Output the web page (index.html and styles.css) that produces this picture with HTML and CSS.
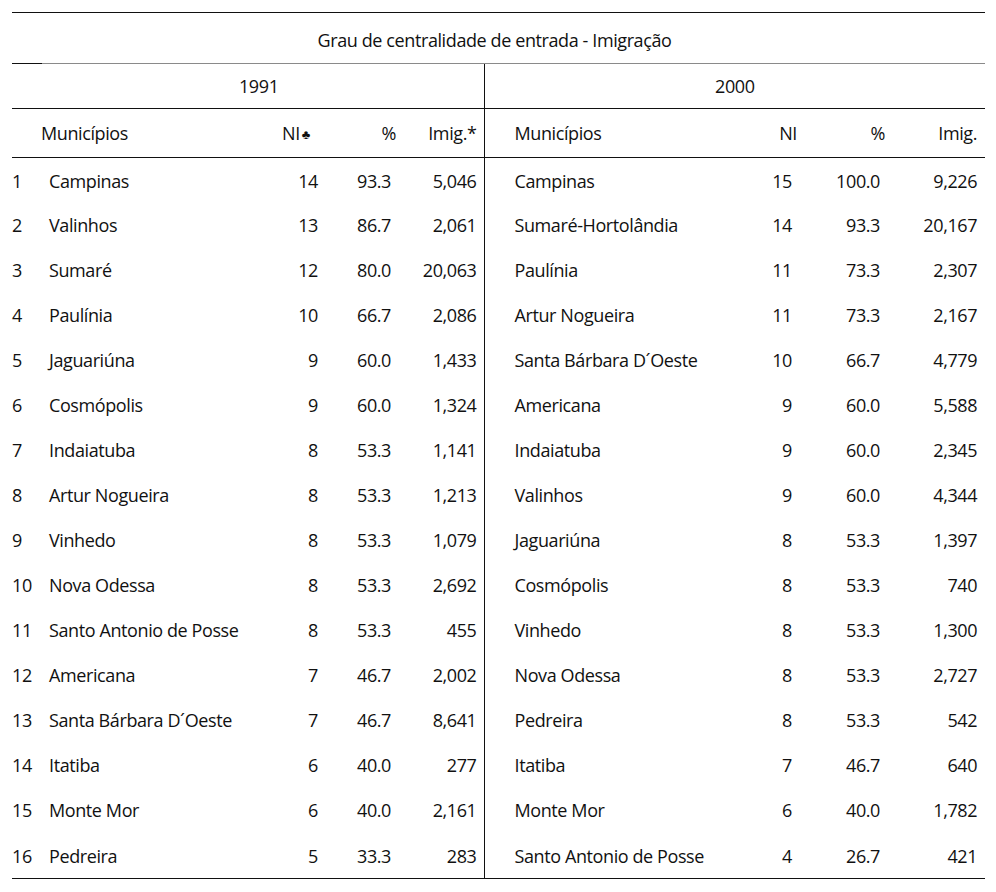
FILE: index.html
```html
<!DOCTYPE html>
<html lang="pt">
<head>
<meta charset="utf-8">
<title>Grau de centralidade de entrada - Imigração</title>
<link rel="stylesheet" href="styles.css">
</head>
<body>
<table class="tbl">
  <colgroup>
    <col class="w-num"><col class="w-name"><col class="w-ni"><col class="w-pc"><col class="w-im">
    <col class="w-name2"><col class="w-ni2"><col class="w-pc2"><col class="w-im2">
  </colgroup>
  <thead>
    <tr class="r-title"><th colspan="9" class="title">Grau de centralidade de entrada - Imigração</th></tr>
    <tr class="r-year"><th colspan="5" class="year y1 sep">1991</th><th colspan="4" class="year y2">2000</th></tr>
    <tr class="r-head">
      <th colspan="2" class="h-name1">Municípios</th>
      <th class="h-ni1">NI<span class="club">♣</span></th>
      <th class="h-pc1">%</th>
      <th class="h-im1 sep">Imig.*</th>
      <th class="h-name2">Municípios</th>
      <th class="h-ni2">NI</th>
      <th class="h-pc2">%</th>
      <th class="h-im2">Imig.</th>
    </tr>
  </thead>
  <tbody>
    <tr><td class="num">1</td><td class="name">Campinas</td><td class="ni">14</td><td class="pc">93.3</td><td class="im sep">5,046</td><td class="name2">Campinas</td><td class="ni2">15</td><td class="pc2">100.0</td><td class="im2">9,226</td></tr>
    <tr><td class="num">2</td><td class="name">Valinhos</td><td class="ni">13</td><td class="pc">86.7</td><td class="im sep">2,061</td><td class="name2">Sumaré-Hortolândia</td><td class="ni2">14</td><td class="pc2">93.3</td><td class="im2">20,167</td></tr>
    <tr><td class="num">3</td><td class="name">Sumaré</td><td class="ni">12</td><td class="pc">80.0</td><td class="im sep">20,063</td><td class="name2">Paulínia</td><td class="ni2">11</td><td class="pc2">73.3</td><td class="im2">2,307</td></tr>
    <tr><td class="num">4</td><td class="name">Paulínia</td><td class="ni">10</td><td class="pc">66.7</td><td class="im sep">2,086</td><td class="name2">Artur Nogueira</td><td class="ni2">11</td><td class="pc2">73.3</td><td class="im2">2,167</td></tr>
    <tr><td class="num">5</td><td class="name">Jaguariúna</td><td class="ni">9</td><td class="pc">60.0</td><td class="im sep">1,433</td><td class="name2">Santa Bárbara D´Oeste</td><td class="ni2">10</td><td class="pc2">66.7</td><td class="im2">4,779</td></tr>
    <tr><td class="num">6</td><td class="name">Cosmópolis</td><td class="ni">9</td><td class="pc">60.0</td><td class="im sep">1,324</td><td class="name2">Americana</td><td class="ni2">9</td><td class="pc2">60.0</td><td class="im2">5,588</td></tr>
    <tr><td class="num">7</td><td class="name">Indaiatuba</td><td class="ni">8</td><td class="pc">53.3</td><td class="im sep">1,141</td><td class="name2">Indaiatuba</td><td class="ni2">9</td><td class="pc2">60.0</td><td class="im2">2,345</td></tr>
    <tr><td class="num">8</td><td class="name">Artur Nogueira</td><td class="ni">8</td><td class="pc">53.3</td><td class="im sep">1,213</td><td class="name2">Valinhos</td><td class="ni2">9</td><td class="pc2">60.0</td><td class="im2">4,344</td></tr>
    <tr><td class="num">9</td><td class="name">Vinhedo</td><td class="ni">8</td><td class="pc">53.3</td><td class="im sep">1,079</td><td class="name2">Jaguariúna</td><td class="ni2">8</td><td class="pc2">53.3</td><td class="im2">1,397</td></tr>
    <tr><td class="num">10</td><td class="name">Nova Odessa</td><td class="ni">8</td><td class="pc">53.3</td><td class="im sep">2,692</td><td class="name2">Cosmópolis</td><td class="ni2">8</td><td class="pc2">53.3</td><td class="im2">740</td></tr>
    <tr><td class="num">11</td><td class="name">Santo Antonio de Posse</td><td class="ni">8</td><td class="pc">53.3</td><td class="im sep">455</td><td class="name2">Vinhedo</td><td class="ni2">8</td><td class="pc2">53.3</td><td class="im2">1,300</td></tr>
    <tr><td class="num">12</td><td class="name">Americana</td><td class="ni">7</td><td class="pc">46.7</td><td class="im sep">2,002</td><td class="name2">Nova Odessa</td><td class="ni2">8</td><td class="pc2">53.3</td><td class="im2">2,727</td></tr>
    <tr><td class="num">13</td><td class="name">Santa Bárbara D´Oeste</td><td class="ni">7</td><td class="pc">46.7</td><td class="im sep">8,641</td><td class="name2">Pedreira</td><td class="ni2">8</td><td class="pc2">53.3</td><td class="im2">542</td></tr>
    <tr><td class="num">14</td><td class="name">Itatiba</td><td class="ni">6</td><td class="pc">40.0</td><td class="im sep">277</td><td class="name2">Itatiba</td><td class="ni2">7</td><td class="pc2">46.7</td><td class="im2">640</td></tr>
    <tr><td class="num">15</td><td class="name">Monte Mor</td><td class="ni">6</td><td class="pc">40.0</td><td class="im sep">2,161</td><td class="name2">Monte Mor</td><td class="ni2">6</td><td class="pc2">40.0</td><td class="im2">1,782</td></tr>
    <tr><td class="num">16</td><td class="name">Pedreira</td><td class="ni">5</td><td class="pc">33.3</td><td class="im sep">283</td><td class="name2">Santo Antonio de Posse</td><td class="ni2">4</td><td class="pc2">26.7</td><td class="im2">421</td></tr>
  </tbody>
</table>
</body>
</html>
```
FILE: styles.css
```css
html, body {
  margin: 0;
  padding: 0;
  background: #ffffff;
}
body {
  padding: 12px 0 0 12px;
  font-family: "Open Sans", "Noto Sans", "Liberation Sans", sans-serif;
  font-size: 18px;
  font-weight: 500;
  color: #111111;
}
.tbl {
  border-collapse: collapse;
  table-layout: fixed;
  width: 973px;
  border-top: 1px solid #111111;
  border-bottom: 1px solid #111111;
  letter-spacing: -0.4px;
}
.w-num { width: 32px; }
.w-name { width: 206px; }
.w-ni { width: 73px; }
.w-pc { width: 73px; }
.w-im { width: 88px; }
.w-name2 { width: 216px; }
.w-ni2 { width: 97px; }
.w-pc2 { width: 88px; }
.w-im2 { width: 100px; }

th, td {
  padding: 0;
  font-weight: inherit;
  white-space: nowrap;
  vertical-align: middle;
}
.sep { border-right: 1px solid #111111; }

.r-title th { height: 49px; padding-top: 2px; }
.title {
  text-align: center;
  padding-right: 8px;
  background-image: linear-gradient(to right, #111111 30px, #8a8a8a 30px);
  background-size: 100% 1px;
  background-position: left bottom;
  background-repeat: no-repeat;
}
.r-year th { height: 44px; border-bottom: 1px solid #111111; }
.y1 { text-align: center; padding-left: 22px; }
.y2 { text-align: center; }

.r-head th { height: 48px; border-bottom: 1px solid #111111; }
.h-name1 { text-align: left; padding-left: 29px; }
.h-ni1 { text-align: right; padding-right: 13px; }
.club { font-size: 13px; margin-left: 2px; position: relative; top: -1px; }
.h-pc1 { text-align: right; }
.h-im1 { text-align: right; padding-right: 7px; }
.h-name2 { text-align: left; padding-left: 30px; }
.h-ni2 { text-align: right; }
.h-pc2 { text-align: right; }
.h-im2 { text-align: right; padding-right: 8px; }

tbody tr { height: 45px; }
tbody tr:first-child td { padding-top: 2px; }
tbody tr:last-child { height: 46px; }
tbody tr:last-child td { padding-top: 1px; }
.num { text-align: left; }
.name { text-align: left; padding-left: 5px; }
.ni { text-align: right; padding-right: 5px; }
.pc { text-align: right; padding-right: 5px; }
.im { text-align: right; padding-right: 7px; }
.name2 { text-align: left; padding-left: 30px; }
.ni2 { text-align: right; padding-right: 5px; }
.pc2 { text-align: right; padding-right: 5px; }
.im2 { text-align: right; padding-right: 8px; }
```
